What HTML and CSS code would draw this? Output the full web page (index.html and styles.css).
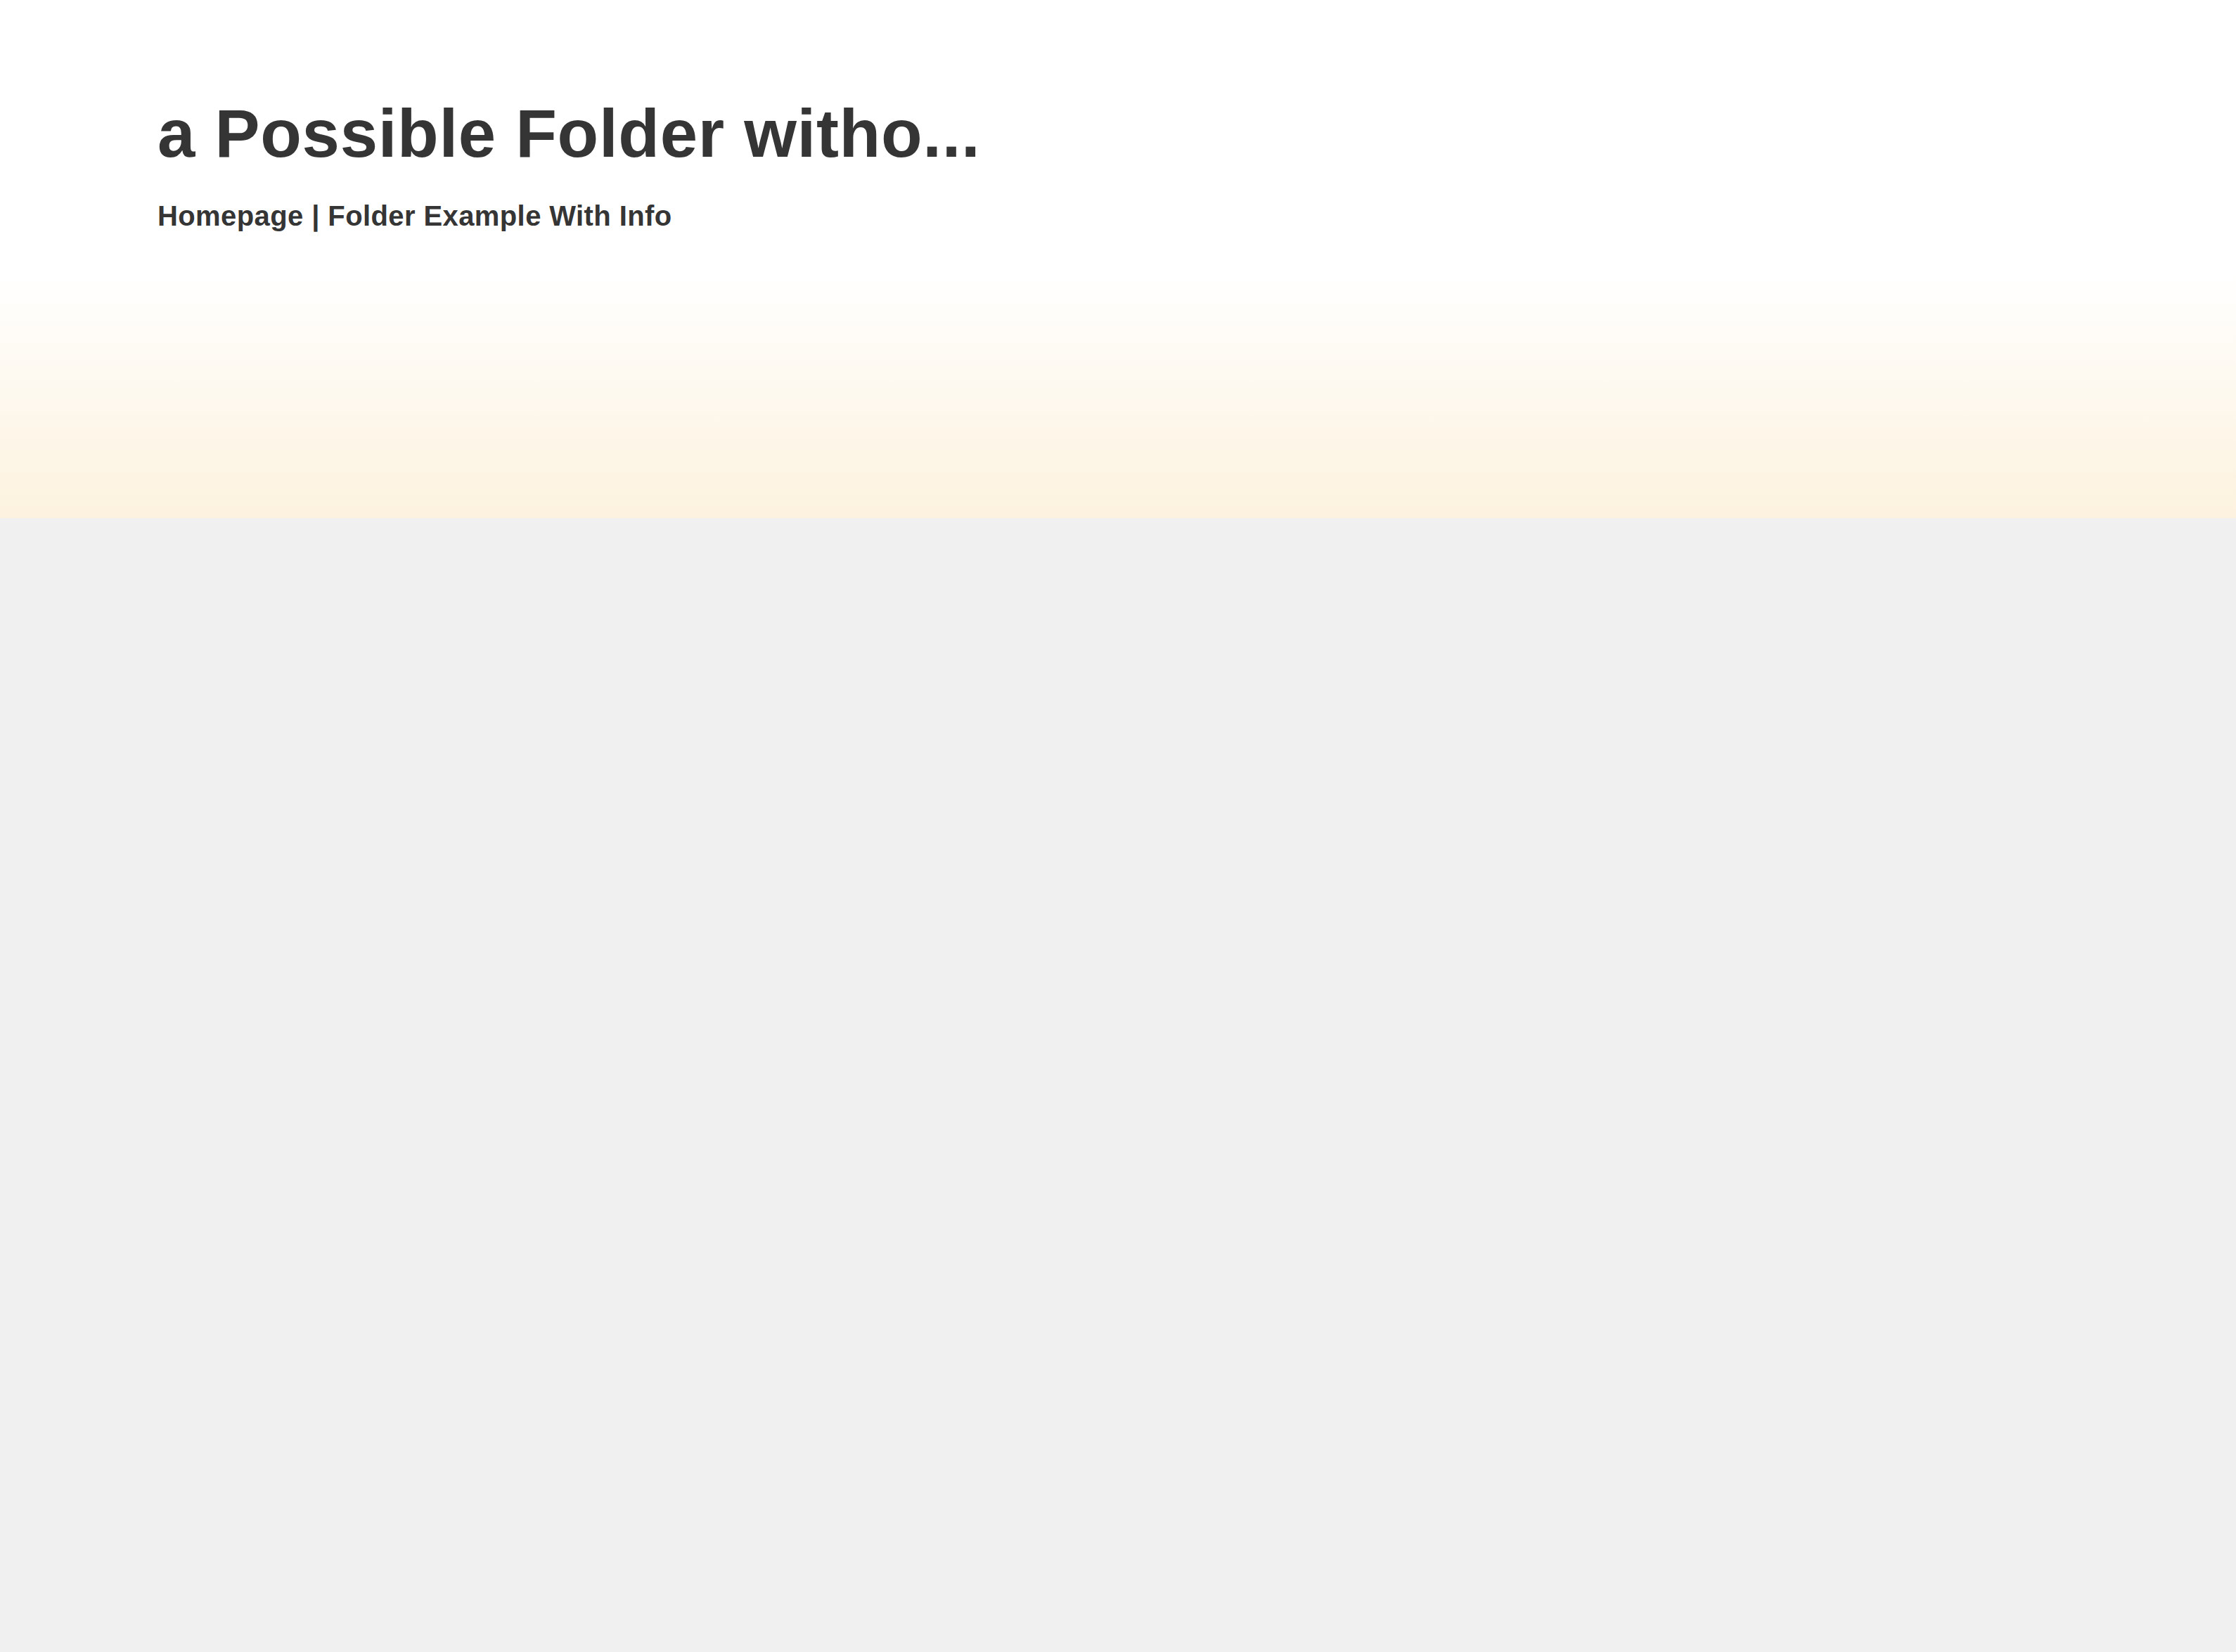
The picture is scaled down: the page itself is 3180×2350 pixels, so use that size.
FILE: index.html
```html
<!DOCTYPE html>
<html lang="en">
<head>
<meta charset="utf-8">
<title>a Possible Folder without info</title>
<link rel="stylesheet" href="styles.css">
</head>
<body>
<header class="hero">
  <h1 class="hero-title">a Possible Folder witho...</h1>
  <p class="hero-crumbs">Homepage | Folder Example With Info</p>
</header>
<main class="content"></main>
</body>
</html>
```
FILE: styles.css
```css
html, body {
  margin: 0;
  padding: 0;
}
body {
  background: #f0f0f0;
  font-family: "Liberation Sans", Arial, Helvetica, sans-serif;
  color: #333333;
  min-height: 2350px;
}
.hero {
  height: 737px;
  box-sizing: border-box;
  padding: 135px 224px 0 224px;
  background: linear-gradient(180deg, #ffffff 0%, #ffffff 52%, #fcf2de 100%);
}
.hero-title {
  margin: 0;
  font-size: 96px;
  line-height: 110px;
  font-weight: 700;
  letter-spacing: 0.7px;
  color: #353535;
  white-space: nowrap;
}
.hero-crumbs {
  margin: 39px 0 0 0;
  font-size: 40px;
  line-height: 46px;
  font-weight: 700;
  letter-spacing: 0.4px;
  color: #353535;
}
.content {
  display: block;
}
```
